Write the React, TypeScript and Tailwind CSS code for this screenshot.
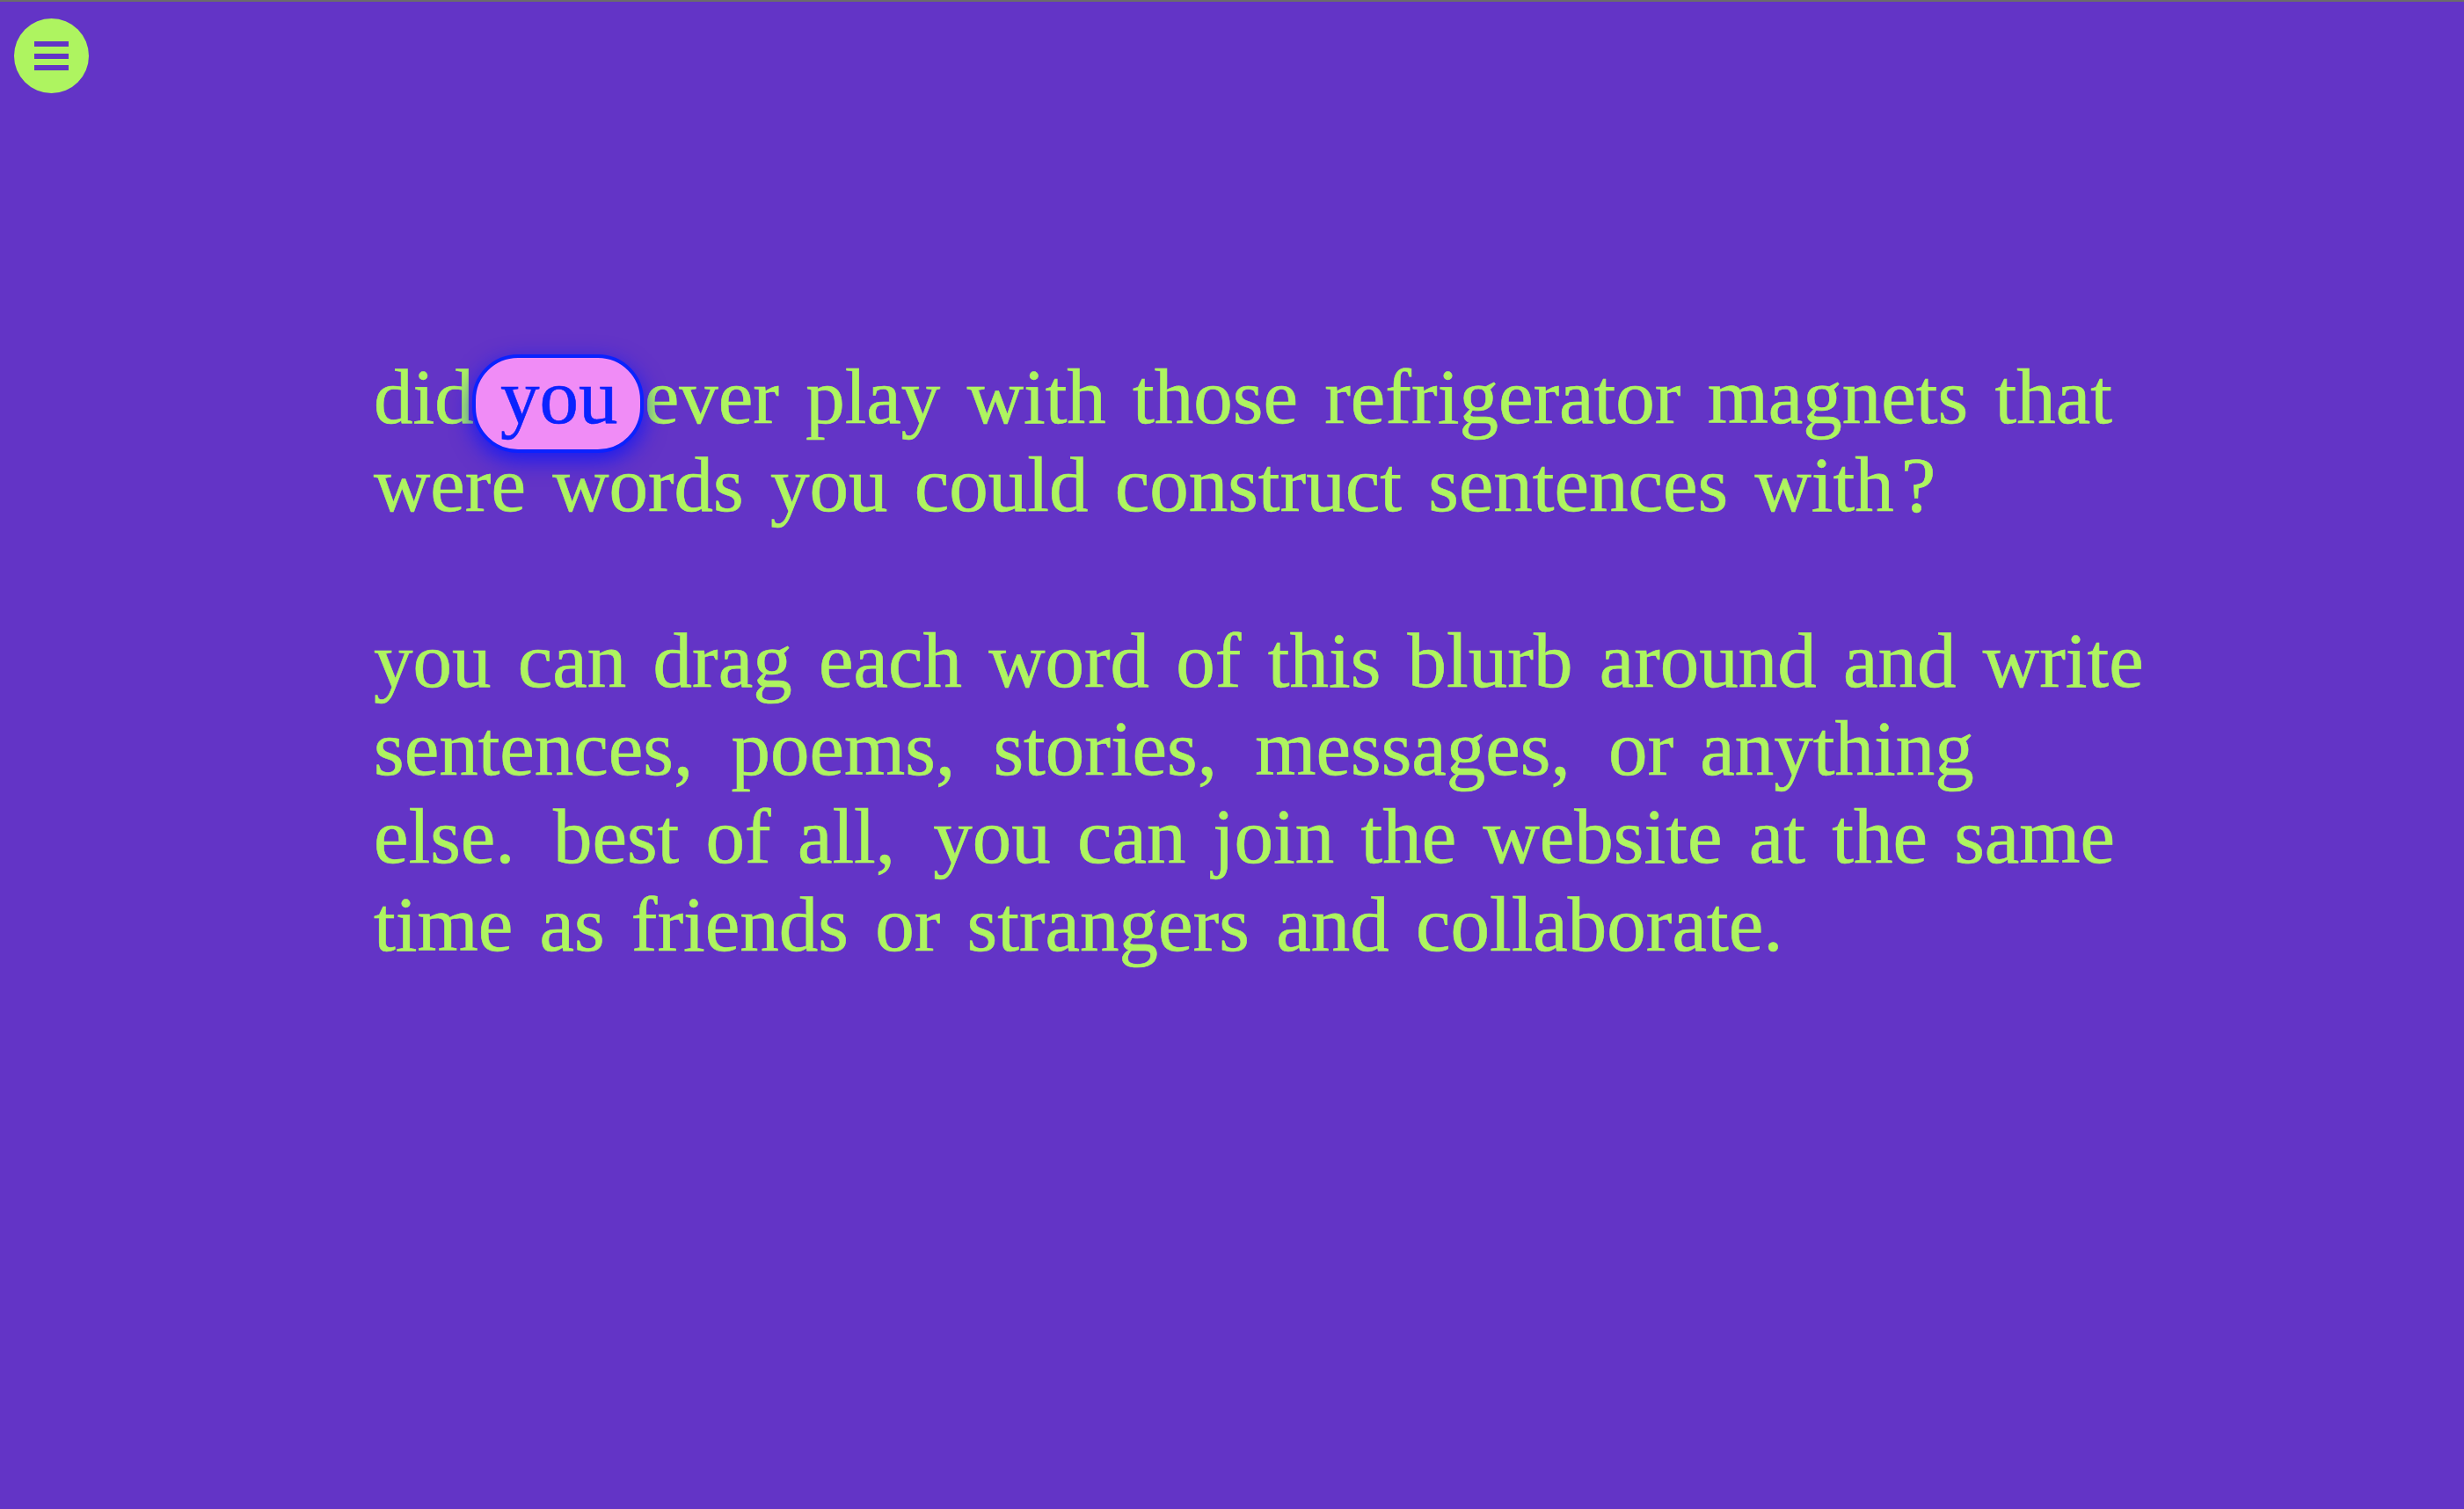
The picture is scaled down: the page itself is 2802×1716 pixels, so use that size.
import React from 'react';

// "?" sits in its own token; commas and periods stay on their word
const paragraphs = [
    "did you ever play with those refrigerator magnets that were words you could construct sentences with ?",
    "you can drag each word of this blurb around and write sentences, poems, stories, messages, or anything else. best of all, you can join the website at the same time as friends or strangers and collaborate.",
];

function Word({ text, active }: { text: string; active?: boolean }) {
    const trailing = /[.,]$/.test(text);
    if (active) {
        return (
            <span className="relative z-10 inline-block px-[4px] text-[#0a22ff]">
                <span className="absolute -left-[28px] -right-[26px] top-[2px] -bottom-[14px] -z-10 rounded-[52px] border-[4px] border-[#0a22ff] bg-[#f08cf6] shadow-[0_8px_26px_rgba(0,20,255,0.8)]" />
                {text}
            </span>
        );
    }
    return <span className={trailing ? "inline-block pl-[4px] pr-[17px]" : "inline-block px-[4px]"}>{text}</span>;
}

export default function App() {
    return (
        <div className="min-h-screen w-full border-t-2 border-[#6b6b6b] bg-[#6334c6]">
            <button className="ml-[16px] mt-[19px] flex h-[85px] w-[85px] flex-col items-center justify-center gap-[7.5px] rounded-full bg-[#aef460]">
                <span className="h-[6px] w-[39px] bg-[#6334c6]" />
                <span className="h-[6px] w-[39px] bg-[#6334c6]" />
                <span className="h-[6px] w-[39px] bg-[#6334c6]" />
            </button>

            <div
                className="ml-[421px] mt-[295px] w-[2027px] text-[89px] leading-[100px] text-[#aef460] [-webkit-text-stroke:0.6px_currentColor]"
                style={{ fontFamily: '"Liberation Serif", "Times New Roman", serif' }}
            >
                {paragraphs.map((p, pi) => {
                    const tokens = p.split(' ');
                    let seenYou = false;
                    return (
                        <p key={pi} className={pi > 0 ? "mt-[100px]" : ""}>
                            {tokens.map((t, i) => {
                                const active = pi === 0 && t === 'you' && !seenYou;
                                if (active) seenYou = true;
                                return (
                                    <React.Fragment key={i}>
                                        {i > 0 && t !== '?' ? ' ' : null}
                                        <Word text={t} active={active} />
                                    </React.Fragment>
                                );
                            })}
                        </p>
                    );
                })}
            </div>
        </div>
    );
}
